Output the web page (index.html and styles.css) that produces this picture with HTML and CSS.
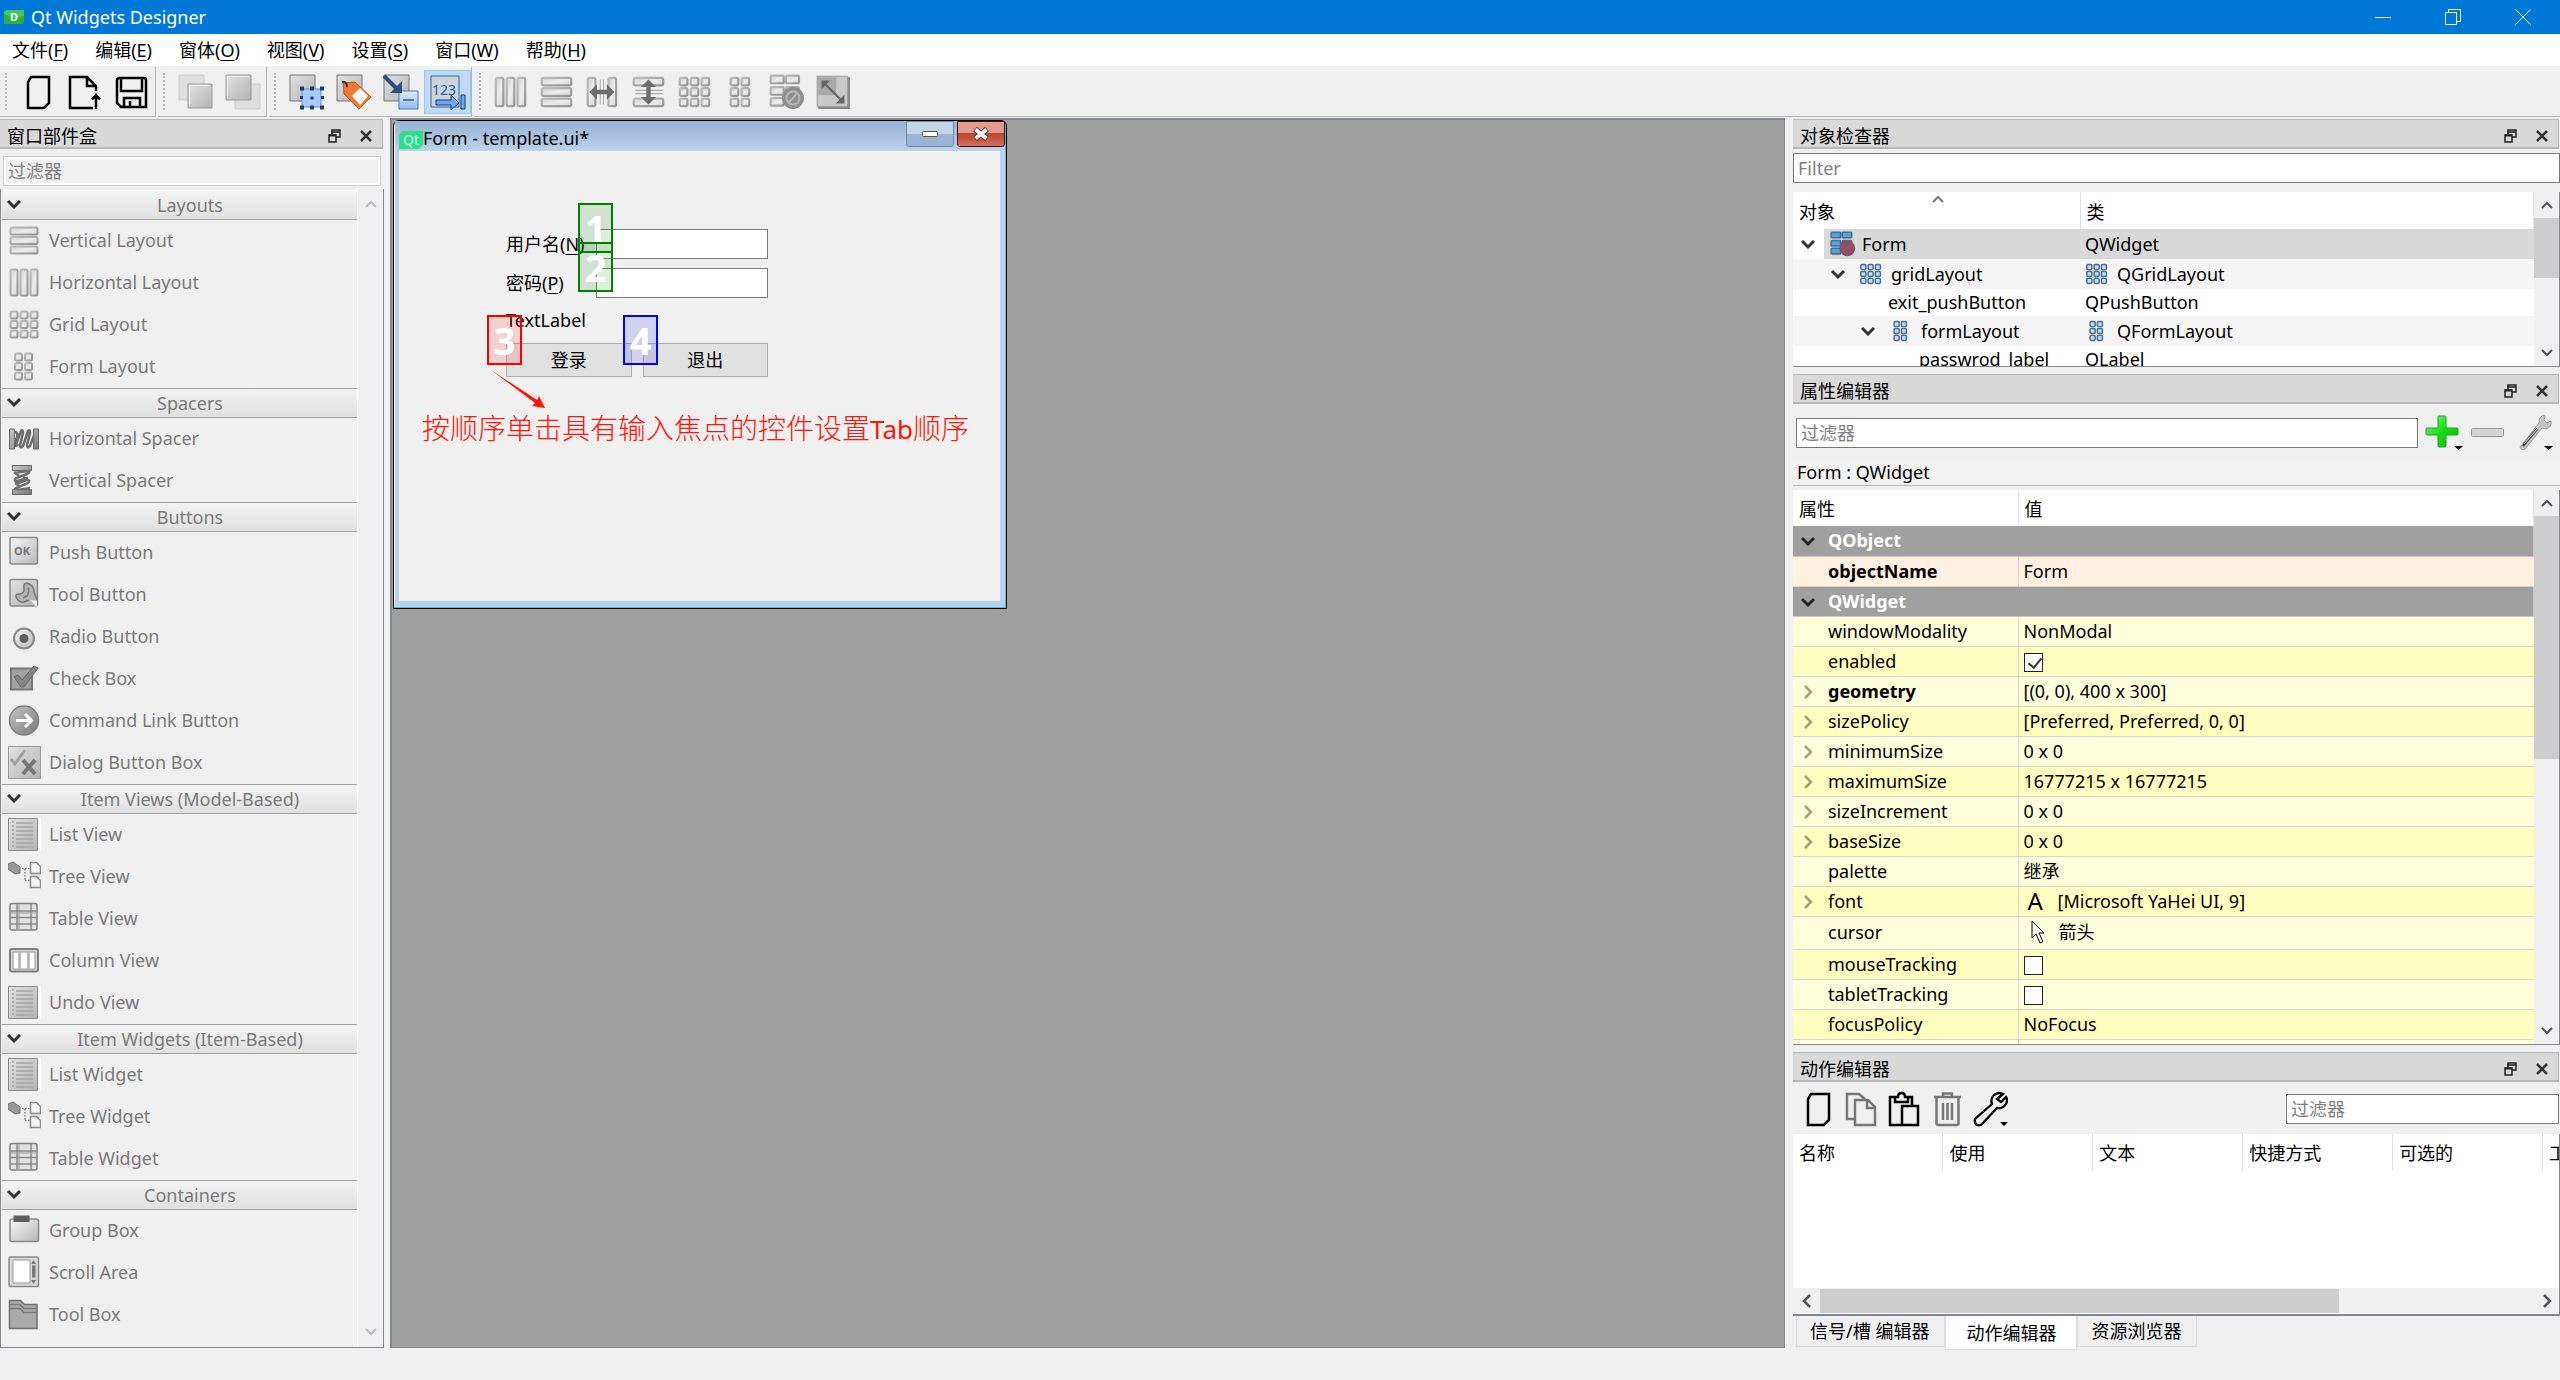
FILE: index.html
```html
<!DOCTYPE html>
<html lang="zh-CN">
<head>
<meta charset="utf-8">
<title>Qt Widgets Designer</title>
<link rel="stylesheet" href="styles.css">
</head>
<body>
<svg class="defs" aria-hidden="true">
  <defs>
    <linearGradient id="g-metal" x1="0" y1="0" x2="1" y2="1"><stop offset="0" stop-color="#f8f8f8"/><stop offset="1" stop-color="#b8b8b8"/></linearGradient>
    <linearGradient id="g-panel" x1="0" y1="0" x2="1" y2="1"><stop offset="0" stop-color="#e2e2e2"/><stop offset="1" stop-color="#b4b4b4"/></linearGradient>
    <linearGradient id="g-dark" x1="0" y1="0" x2="1" y2="1"><stop offset="0" stop-color="#c8c8c8"/><stop offset="1" stop-color="#787878"/></linearGradient>
    <linearGradient id="g-bevel" x1="0" y1="0" x2="1" y2="1"><stop offset="0" stop-color="#d2d2d2"/><stop offset=".5" stop-color="#ececec"/><stop offset="1" stop-color="#d8d8d8"/></linearGradient>
    <linearGradient id="g-edge" x1="0" y1="0" x2="1" y2="1"><stop offset="0" stop-color="#bcbcbc"/><stop offset="1" stop-color="#949494"/></linearGradient>
    <linearGradient id="g-blue" x1="0" y1="0" x2="0" y2="1"><stop offset="0" stop-color="#e0edff"/><stop offset="1" stop-color="#8db8f5"/></linearGradient>
    <linearGradient id="g-green" x1="0" y1="0" x2="1" y2="1"><stop offset="0" stop-color="#7dff7d"/><stop offset=".5" stop-color="#12e012"/><stop offset="1" stop-color="#05b805"/></linearGradient>
  </defs>
  <symbol id="bars-h" viewBox="0 0 33 33"><g class="bevel"><rect x="2.5" y="3.5" width="27" height="7" rx="1.5"/><rect x="2.5" y="13" width="27" height="7" rx="1.5"/><rect x="2.5" y="22.5" width="27" height="7" rx="1.5"/></g></symbol>
  <symbol id="bars-v" viewBox="0 0 33 33"><g class="bevel"><rect x="2.5" y="3.5" width="7" height="26" rx="1.5"/><rect x="12.5" y="3.5" width="7" height="26" rx="1.5"/><rect x="22.5" y="3.5" width="7" height="26" rx="1.5"/></g></symbol>
  <symbol id="grid" viewBox="0 0 33 33"><g class="bevel"><rect x="2.5" y="3.5" width="7" height="7" rx="1.5"/><rect x="12.5" y="3.5" width="7" height="7" rx="1.5"/><rect x="22.5" y="3.5" width="7" height="7" rx="1.5"/><rect x="2.5" y="13" width="7" height="7" rx="1.5"/><rect x="12.5" y="13" width="7" height="7" rx="1.5"/><rect x="22.5" y="13" width="7" height="7" rx="1.5"/><rect x="2.5" y="22.5" width="7" height="7" rx="1.5"/><rect x="12.5" y="22.5" width="7" height="7" rx="1.5"/><rect x="22.5" y="22.5" width="7" height="7" rx="1.5"/></g></symbol>
  <symbol id="form" viewBox="0 0 33 33"><g class="bevel"><rect x="7" y="3.5" width="7" height="7" rx="1.5"/><rect x="17" y="3.5" width="7" height="7" rx="1.5"/><rect x="7" y="13" width="7" height="7" rx="1.5"/><rect x="17" y="13" width="7" height="7" rx="1.5"/><rect x="7" y="22.5" width="7" height="7" rx="1.5"/><rect x="17" y="22.5" width="7" height="7" rx="1.5"/></g></symbol>
  <symbol id="split-h" viewBox="0 0 33 33"><g class="bevel"><rect x="2.5" y="3.5" width="7" height="26" rx="1.5"/><rect x="21.5" y="3.5" width="7" height="26" rx="1.5"/></g><path d="M14 5v23M17 5v23" stroke="#aaa" fill="none"/><path d="M4 16.5l7-7v5h9v-5l7 7-7 7v-5h-9v5z" fill="#6d6d6d"/></symbol>
  <symbol id="split-v" viewBox="0 0 33 33"><g class="bevel"><rect x="2.5" y="3.5" width="27" height="7" rx="1.5"/><rect x="2.5" y="22.5" width="27" height="7" rx="1.5"/></g><path d="M4 15h25M4 18h25" stroke="#aaa" fill="none"/><path d="M16 5l7 7h-5v9h5l-7 7-7-7h5v-9h-5z" fill="#6d6d6d"/></symbol>
  <symbol id="break" viewBox="0 0 33 33"><g class="bevel"><rect x="1.5" y="1.5" width="12" height="7" rx="1"/><rect x="15.5" y="1.5" width="12" height="7" rx="1"/><rect x="1.5" y="12" width="12" height="7" rx="1"/><rect x="15.5" y="12" width="12" height="7" rx="1"/><rect x="1.5" y="22" width="12" height="7" rx="1"/></g><circle class="no-disc" cx="22" cy="22" r="10"/><circle class="no-ring" cx="22" cy="22" r="6"/><path class="no-ring" d="M18 26.500l8-9"/></symbol>
  <symbol id="adjust" viewBox="0 0 33 33"><path d="M2 2h28v28h-28z" fill="#c9c9c9" stroke="#a0a0a0"/><path d="M2.500 2.500h17v17h-17z" fill="#aaa"/><path d="M31 3v28h-28" stroke="#888" stroke-width="2" fill="none"/><path d="M9 9l16 16" stroke="#666" stroke-width="2"/><path d="M6 6h8l-8 8zM27 27v-8l-8 8z" fill="#666"/></symbol>

  <symbol id="new" viewBox="0 0 36 36"><path d="M11 3h18v26l-5 5h-16v-26z" fill="none" stroke="currentColor" stroke-width="2.500"/></symbol>
  <symbol id="open" viewBox="0 0 36 36"><path d="M26 34h-23v-31h17l9 9v5M20 3v9h9" fill="none" stroke="#000" stroke-width="2.500"/><path d="M29 35v-14M25 25.500l4-4.500 4 4.500" fill="none" stroke="#000" stroke-width="2.500"/></symbol>
  <symbol id="save" viewBox="0 0 36 36"><path d="M6 4h24q2 0 2 2v27h-25l-4-4v-23q0-2 3-2z" fill="none" stroke="#000" stroke-width="2.500"/><path d="M7 4v13h21v-13M10 33v-9h16v9M16 32v-5" fill="none" stroke="#000" stroke-width="2.500"/></symbol>
  <symbol id="front" viewBox="0 0 36 36"><path d="M1 1h25v25h-25z" fill="#dedede" stroke="#ccc"/><path d="M10 10h24v24h-24z" fill="url(#g-panel)" stroke="#999"/><path d="M11.500 32v-20.500h20.500" stroke="#eee" fill="none"/></symbol>
  <symbol id="back" viewBox="0 0 36 36"><path d="M10 10h25v25h-25z" fill="#dedede" stroke="#ccc"/><path d="M1 1h25v25h-25z" fill="url(#g-panel)" stroke="#999"/><path d="M2.500 24v-21.500h21.500" stroke="#eee" fill="none"/></symbol>
  <symbol id="edit-widgets" viewBox="0 0 36 36"><path d="M1 1h25v26h-25z" fill="url(#g-panel)" stroke="#777"/><path d="M13 15h19v18h-19z" fill="#a9cbff" stroke="#5c8fd9"/><path d="M11 12.500h4v4h-4zM21 12.500h4v4h-4zM31 12.500h4v4h-4zM11 22h3v3h-3zM32 22h3v3h-3zM11 31.500h4v4h-4zM21 31.500h4v4h-4zM31 31.500h4v4h-4zM21.500 22.500h3v3h-3z" fill="#1f3b70"/></symbol>
  <symbol id="edit-buddies" viewBox="0 0 36 36"><path d="M1 1h25v26h-25z" fill="url(#g-panel)" stroke="#777"/><path d="M7 9l12-1 16 15-12 12-15-15z" fill="#f07a32" stroke="#b85a20"/><path d="M24 14l8 8-8 9-8-9z" fill="#fff"/><path d="M6 8q5-1 5 5" stroke="#333" stroke-width="2" fill="none"/></symbol>
  <symbol id="edit-signals" viewBox="0 0 36 36"><path d="M1 1h25v26h-25z" fill="url(#g-panel)" stroke="#777"/><path d="M16 17h19v18h-19z" fill="url(#g-blue)" stroke="#5576ad"/><path d="M20 26h11" stroke="#5576ad" stroke-width="2"/><path d="M1 2l13 13" stroke="#2d4f86" stroke-width="4"/><path d="M19 19v-12l-12 12z" fill="#2d4f86"/></symbol>

  <symbol id="spacer-h" viewBox="0 0 33 33"><path d="M7 25l6-16q2-2 2 2l-3 12q0 4 3 1l5-15q2-2 2 2l-3 12q0 4 3 1l5-13M7 10q3 0 2 6M10 24q-3-3-2-8" fill="none" stroke="#6c6c6c" stroke-width="2.500"/><path d="M1.500 7h5v20h-5zM25.500 7h5v20h-5z" fill="url(#g-dark)" stroke="#666"/></symbol>
  <symbol id="spacer-v" viewBox="0 0 33 33"><path d="M6 9l14-2q3 1-1 3l-11 4q-3 3 1 3l11-3M7 20l12-4q4 0 1 3l-12 5q-3 2 2 2l12-2M6 8l5 4M21 16l-6-3M7 19l6 4" fill="none" stroke="#707070" stroke-width="2.500"/><path d="M4.500 1.500h19v5h-19zM4.500 25.500h19v5h-19z" fill="url(#g-dark)" stroke="#666"/></symbol>
  <symbol id="tool" viewBox="0 0 33 33"><rect x="2" y="1.500" width="27.500" height="26.500" rx="2" fill="url(#g-panel)" stroke="#888" stroke-width="1.500"/><path d="M19 5q-5 0-4 6 1 4-3 4-4-1-5 2 0 6 7 8 4 1 7-2l7 7v-10q0-6-3-11-2-4-6-4z" fill="#b4b4b4"/><path d="M19 5q-4 0-3 5 1 5-4 6-5 0-4 3 3 6 8 5l5-2M19 5q7 2 7 9l3 8M20 10q2 3-1 8l-4 2" fill="none" stroke="#777" stroke-width="1.500"/><path d="M22 22l7 1v6z" fill="#f2f2f2"/></symbol>
  <symbol id="radio" viewBox="0 0 33 33"><circle cx="16" cy="18.500" r="10" fill="url(#g-metal)" stroke="#888" stroke-width="2"/><circle cx="16" cy="18.500" r="4.500" fill="#606060"/></symbol>
  <symbol id="check" viewBox="0 0 33 33"><path d="M3 6.500h21v21h-21z" fill="#a2a2a2" stroke="#777" stroke-width="2"/><path d="M6 15l4-2 4 5 12-14 4 2-14 19h-3z" fill="#858585" stroke="#666"/></symbol>
  <symbol id="command" viewBox="0 0 33 33"><circle cx="16" cy="16.500" r="14.500" fill="url(#g-dark)" stroke="#808080" stroke-width="1.500"/><path d="M8 16.500h15M17 10l6.500 6.500-6.500 6.500" stroke="#fff" stroke-width="3" fill="none"/></symbol>
  <symbol id="dialog" viewBox="0 0 33 33"><path d="M.5.5h32v32h-32z" fill="url(#g-panel)" stroke="#999"/><path d="M3 13l4 5 10-14" fill="none" stroke="#a0a0a0" stroke-width="3"/><path d="M15 14l12 14M27 14l-12 14" stroke="#777" stroke-width="4"/></symbol>
  <symbol id="list" viewBox="0 0 33 33"><path d="M30 0h3v33h-3z" fill="#fff"/><path d="M.5.500h29v32h-29z" fill="url(#g-panel)" stroke="#8a8a8a"/><path d="M8 5h17M8 9h17M8 13h17M8 17h17M8 21h17M8 25h17M8 29h17" stroke="#a4a4a4" stroke-width="1.500"/><path d="M5 3v28" stroke="#aaa" stroke-width="2" stroke-dasharray="2 2"/></symbol>
  <symbol id="tree" viewBox="0 0 33 33"><path d="M0 4l5-2 7 5v6l-5 1-7-5z" fill="#999" stroke="#777"/><path d="M14 8.500h8M17 9v12M17 20.500h6" stroke="#777" stroke-width="1.500" stroke-dasharray="1.500 1.500" fill="none"/><path d="M22.500 2.500h6l4 4v7h-10zM22.500 16.500h6l4 4v7h-10z" fill="#f4f4f4" stroke="#888" stroke-width="1.500"/></symbol>
  <symbol id="table" viewBox="0 0 33 33"><rect x="2" y="1.500" width="27" height="26.500" rx="2" fill="#e2e2e2" stroke="#808080" stroke-width="1.500"/><path d="M9 2v26M23 2v26M2 9h27M2 15.500h27M2 22h27" stroke="#8a8a8a" stroke-width="1.500"/><path d="M11 2v26M2 11h27" stroke="#999"/></symbol>
  <symbol id="column" viewBox="0 0 33 33"><rect x="2" y="5" width="28" height="22.500" rx="2" fill="#d6d6d6" stroke="#808080" stroke-width="2"/><path d="M5 8h22v17h-22z" fill="#fff" stroke="#999"/><path d="M11.500 8v17M20.500 8v17" stroke="#bbb" stroke-width="3"/></symbol>
  <symbol id="group" viewBox="0 0 33 33"><rect x="2" y="5" width="28.500" height="22.500" rx="2" fill="url(#g-metal)" stroke="#888" stroke-width="1.500"/><path d="M5.500 1.500h16v6.500h-16z" fill="#5e5e5e"/></symbol>
  <symbol id="scrollarea" viewBox="0 0 33 33"><rect x="1" y="1" width="29.500" height="29.500" rx="1.500" fill="#d8d8d8" stroke="#8a8a8a" stroke-width="1.500"/><path d="M5 4h17v23h-17z" fill="#fff" stroke="#999"/><path d="M25.500 4l2.500 4h-5zM25.500 28l2.500-4h-5zM24 9.500h3.500v12h-3.500z" fill="#777"/></symbol>
  <symbol id="toolbox" viewBox="0 0 33 33"><path d="M1.500 30.500v-28h11l4 4h12.500v24z" fill="#ababab" stroke="#707070" stroke-width="1.500"/><path d="M2 6.500h10l4 4h13M2 10.500h10l4 4h13" fill="none" stroke="#777" stroke-width="1.500"/></symbol>

  <symbol id="restore" viewBox="0 0 14 14"><path d="M5 1h8v7h-8zM4 3h9" fill="none" stroke="#222" stroke-width="1.500"/><path d="M2 6h7v7h-7z" fill="#d9d9d9" stroke="#222" stroke-width="1.500"/><path d="M2 6.500h7" stroke="#222" stroke-width="2"/></symbol>
  <symbol id="close" viewBox="0 0 14 14"><path d="M2 2l10 10M12 2l-10 10" stroke="#333" stroke-width="2.500"/></symbol>
  <symbol id="chev-d" viewBox="0 0 14 14"><path d="M1 4l6 6 6-6" fill="none" stroke="currentColor" stroke-width="3"/></symbol>
  <symbol id="chev-u" viewBox="0 0 14 14"><path d="M2 10l5-5 5 5" fill="none" stroke="currentColor" stroke-width="2"/></symbol>
  <symbol id="chev-s" viewBox="0 0 14 14"><path d="M2 4l5 5 5-5" fill="none" stroke="currentColor" stroke-width="2"/></symbol>
  <symbol id="chev-r" viewBox="0 0 14 14"><path d="M4 1l6 6-6 6" fill="none" stroke="currentColor" stroke-width="2.500"/></symbol>
  <symbol id="chev-l" viewBox="0 0 14 14"><path d="M10 1l-6 6 6 6" fill="none" stroke="currentColor" stroke-width="2.500"/></symbol>
</svg>

<header class="titlebar">
  <svg class="app-icon" viewBox="0 0 20 14"><path d="M2 0h18v12l-2 2h-18v-12z" fill="#2bb13c"/><path d="M2 0h18v6l-10 2-10-4v-2z" fill="#44cc52"/><text x="6" y="11" class="app-d">D</text></svg>
  <h1>Qt Widgets Designer</h1>
  <div class="caption">
    <button aria-label="最小化"><svg width="16" height="16"><path d="M0 8.500h16" stroke="#fff"/></svg></button>
    <button aria-label="还原"><svg width="16" height="16" fill="none" stroke="#fff"><path d="M.5 3.500h11v12h-11zM3.500 3.500v-3h12v12h-4"/></svg></button>
    <button aria-label="关闭"><svg width="16" height="16" stroke="#fff"><path d="M.5.500l15 15M15.500.500l-15 15"/></svg></button>
  </div>
</header>

<nav class="menubar">
  <button>文件(<u>F</u>)</button><button>编辑(<u>E</u>)</button><button>窗体(<u>O</u>)</button><button>视图(<u>V</u>)</button><button>设置(<u>S</u>)</button><button>窗口(<u>W</u>)</button><button>帮助(<u>H</u>)</button>
</nav>

<div class="toolbars">
  <div class="group">
    <button aria-label="新建"><svg><use href="#new"/></svg></button>
    <button aria-label="打开"><svg><use href="#open"/></svg></button>
    <button aria-label="保存"><svg><use href="#save"/></svg></button>
  </div>
  <div class="group">
    <button aria-label="前移"><svg><use href="#front"/></svg></button>
    <button aria-label="后移"><svg><use href="#back"/></svg></button>
  </div>
  <div class="group">
    <button aria-label="编辑控件"><svg><use href="#edit-widgets"/></svg></button>
    <button aria-label="编辑伙伴"><svg><use href="#edit-buddies"/></svg></button>
    <button aria-label="编辑信号/槽"><svg><use href="#edit-signals"/></svg></button>
    <button class="active" aria-label="编辑Tab顺序"><svg viewBox="0 0 36 36"><path d="M1 2h28v31h-28z" fill="#d0d4da" stroke="#2f64ad"/><text x="2" y="21" class="tab-num">123</text><path d="M6 26h15v-5l8 8-8 7v-5h-15zM31 21h4v14h-4z" fill="#6fa9f5" stroke="#16396f"/></svg></button>
  </div>
  <div class="group rest">
    <button aria-label="水平布局"><svg><use href="#bars-v"/></svg></button>
    <button aria-label="垂直布局"><svg><use href="#bars-h"/></svg></button>
    <button aria-label="水平分裂器"><svg><use href="#split-h"/></svg></button>
    <button aria-label="垂直分裂器"><svg><use href="#split-v"/></svg></button>
    <button aria-label="栅格布局"><svg><use href="#grid"/></svg></button>
    <button aria-label="表单布局"><svg><use href="#form"/></svg></button>
    <button aria-label="打破布局"><svg><use href="#break"/></svg></button>
    <button aria-label="调整大小"><svg><use href="#adjust"/></svg></button>
  </div>
</div>

<main class="workspace">
  <aside class="dock left">
    <div class="dock-title"><h2>窗口部件盒</h2><button aria-label="浮动"><svg><use href="#restore"/></svg></button><button aria-label="关闭"><svg><use href="#close"/></svg></button></div>
    <input class="filter" type="text" placeholder="过滤器" aria-label="过滤器">
    <div class="box">
      <div class="categories">
        <h3><svg><use href="#chev-d"/></svg>Layouts</h3>
        <ul>
          <li><svg><use href="#bars-h"/></svg>Vertical Layout</li>
          <li><svg><use href="#bars-v"/></svg>Horizontal Layout</li>
          <li><svg><use href="#grid"/></svg>Grid Layout</li>
          <li><svg><use href="#form"/></svg>Form Layout</li>
        </ul>
        <h3><svg><use href="#chev-d"/></svg>Spacers</h3>
        <ul>
          <li><svg><use href="#spacer-h"/></svg>Horizontal Spacer</li>
          <li><svg><use href="#spacer-v"/></svg>Vertical Spacer</li>
        </ul>
        <h3><svg><use href="#chev-d"/></svg>Buttons</h3>
        <ul>
          <li><svg viewBox="0 0 33 33"><rect x="2" y="1.500" width="27.500" height="26.500" rx="2" fill="url(#g-metal)" stroke="#888" stroke-width="1.500"/><text x="6" y="19" class="ok">OK</text></svg>Push Button</li>
          <li><svg><use href="#tool"/></svg>Tool Button</li>
          <li><svg><use href="#radio"/></svg>Radio Button</li>
          <li><svg><use href="#check"/></svg>Check Box</li>
          <li><svg><use href="#command"/></svg>Command Link Button</li>
          <li><svg><use href="#dialog"/></svg>Dialog Button Box</li>
        </ul>
        <h3><svg><use href="#chev-d"/></svg>Item Views (Model-Based)</h3>
        <ul>
          <li><svg><use href="#list"/></svg>List View</li>
          <li><svg><use href="#tree"/></svg>Tree View</li>
          <li><svg><use href="#table"/></svg>Table View</li>
          <li><svg><use href="#column"/></svg>Column View</li>
          <li><svg><use href="#list"/></svg>Undo View</li>
        </ul>
        <h3><svg><use href="#chev-d"/></svg>Item Widgets (Item-Based)</h3>
        <ul>
          <li><svg><use href="#list"/></svg>List Widget</li>
          <li><svg><use href="#tree"/></svg>Tree Widget</li>
          <li><svg><use href="#table"/></svg>Table Widget</li>
        </ul>
        <h3><svg><use href="#chev-d"/></svg>Containers</h3>
        <ul>
          <li><svg><use href="#group"/></svg>Group Box</li>
          <li><svg><use href="#scrollarea"/></svg>Scroll Area</li>
          <li><svg><use href="#toolbox"/></svg>Tool Box</li>
        </ul>
      </div>
      <div class="vscroll faint"><svg><use href="#chev-u"/></svg><svg><use href="#chev-s"/></svg></div>
    </div>
  </aside>

  <section class="mdi">
    <div class="subwindow">
      <div class="sub-title">
        <svg class="qt" viewBox="0 0 24 18"><path d="M4 0h20v14l-4 4h-20v-14z" fill="#2cde85"/><text x="4" y="14" class="qt-text">Qt</text></svg>
        <span>Form - template.ui*</span>
        <button class="min" aria-label="最小化"><svg width="16" height="6"><rect x=".5" y=".5" width="15" height="5" rx="1" fill="#fff" stroke="#555"/></svg></button>
        <button class="x" aria-label="关闭"><svg width="18" height="16"><path d="M3 3l12 10M15 3l-12 10" stroke="#4a3a44" stroke-width="6"/><path d="M3.500 3.500l11 9M14.500 3.500l-11 9" stroke="#f4f4f4" stroke-width="4"/></svg></button>
      </div>
      <div class="client">
        <form class="login">
          <div class="field"><label for="user">用户名(<u>N</u>)</label><input id="user" type="text"></div>
          <div class="field"><label for="pass">密码(<u>P</u>)</label><input id="pass" type="password"></div>
          <p>TextLabel</p>
          <div class="actions"><button type="button">登录</button><button type="button">退出</button></div>
        </form>
        <span class="mark m1">1</span><span class="mark m2">2</span><span class="mark m3">3</span><span class="mark m4">4</span>
        <svg class="arrow" viewBox="0 0 56 40"><path d="M1 1L45 34l-3 3 13 2-6-12-2 4z" fill="#ff1408"/></svg>
        <p class="note">按顺序单击具有输入焦点的控件设置<b>Tab</b>顺序</p>
      </div>
    </div>
  </section>

  <aside class="right">
    <section class="dock inspector">
      <div class="dock-title"><h2>对象检查器</h2><button aria-label="浮动"><svg><use href="#restore"/></svg></button><button aria-label="关闭"><svg><use href="#close"/></svg></button></div>
      <input class="filter" type="text" placeholder="Filter" aria-label="Filter">
      <div class="box">
        <div class="clip">
          <table class="objects">
            <thead><tr><th>对象<svg class="sort"><use href="#chev-u"/></svg></th><th>类</th></tr></thead>
            <tbody>
              <tr class="sel"><td><div class="cell d0"><svg class="ch"><use href="#chev-d"/></svg><span class="fill"><svg class="ic big"><use href="#break"/></svg>Form</span></div></td><td>QWidget</td></tr>
              <tr class="alt"><td><div class="cell d1"><svg class="ch"><use href="#chev-d"/></svg><svg class="ic"><use href="#grid"/></svg>gridLayout</div></td><td><div class="cell"><svg class="ic"><use href="#grid"/></svg>QGridLayout</div></td></tr>
              <tr class="low"><td><div class="cell d2">exit_pushButton</div></td><td>QPushButton</td></tr>
              <tr class="alt"><td><div class="cell d3"><svg class="ch"><use href="#chev-d"/></svg><svg class="ic"><use href="#form"/></svg>formLayout</div></td><td><div class="cell"><svg class="ic"><use href="#form"/></svg>QFormLayout</div></td></tr>
              <tr class="low"><td><div class="cell d4">passwrod_label</div></td><td>QLabel</td></tr>
            </tbody>
          </table>
        </div>
        <div class="vscroll"><svg><use href="#chev-u"/></svg><i class="thumb"></i><svg><use href="#chev-s"/></svg></div>
      </div>
    </section>

    <section class="dock properties">
      <div class="dock-title"><h2>属性编辑器</h2><button aria-label="浮动"><svg><use href="#restore"/></svg></button><button aria-label="关闭"><svg><use href="#close"/></svg></button></div>
      <div class="bar">
        <input class="filter" type="text" placeholder="过滤器" aria-label="过滤器">
        <button aria-label="添加动态属性"><svg viewBox="0 0 38 38"><path d="M13 3q0-1 1-1h6q1 0 1 1v11h11q1 0 1 1v5q0 1-1 1h-11v11q0 1-1 1h-6q-1 0-1-1v-11h-11q-1 0-1-1v-5q0-1 1-1h11z" fill="url(#g-green)" stroke="#2c9c2c"/><path d="M29 32h9l-4.500 4z"/></svg></button>
        <button aria-label="删除动态属性"><svg viewBox="0 0 38 38"><rect x="1.500" y="14.500" width="32" height="8" rx="1" fill="#d5d5d5" stroke="#999"/></svg></button>
        <button aria-label="配置属性编辑器"><svg viewBox="0 0 38 38"><path d="M24 9q-1-5 4-8l2 1-1 4 3 3 4-2q1 6-5 8l-4-1-17 21q-4 2-5-2z" fill="#c4c4c4" stroke="#999"/><path d="M22 15l-14 17" stroke="#444" stroke-width="2.500"/><path d="M23 14l-14 16" stroke="#eee"/><path d="M29 32h9l-4.500 4z"/></svg></button>
      </div>
      <p class="object-label">Form : QWidget</p>
      <div class="box">
        <div class="clip">
          <table class="props">
            <thead><tr><th>属性</th><th>值</th></tr></thead>
            <tbody>
              <tr class="head"><th colspan="2"><svg><use href="#chev-d"/></svg>QObject</th></tr>
              <tr class="peach"><th class="bold">objectName</th><td>Form</td></tr>
              <tr class="head"><th colspan="2"><svg><use href="#chev-d"/></svg>QWidget</th></tr>
              <tr><th>windowModality</th><td>NonModal</td></tr>
              <tr class="odd"><th><label for="p-enabled">enabled</label></th><td><input id="p-enabled" type="checkbox" checked></td></tr>
              <tr><th class="bold"><svg><use href="#chev-r"/></svg>geometry</th><td>[(0, 0), 400 x 300]</td></tr>
              <tr class="odd"><th><svg><use href="#chev-r"/></svg>sizePolicy</th><td>[Preferred, Preferred, 0, 0]</td></tr>
              <tr><th><svg><use href="#chev-r"/></svg>minimumSize</th><td>0 x 0</td></tr>
              <tr class="odd"><th><svg><use href="#chev-r"/></svg>maximumSize</th><td>16777215 x 16777215</td></tr>
              <tr><th><svg><use href="#chev-r"/></svg>sizeIncrement</th><td>0 x 0</td></tr>
              <tr class="odd"><th><svg><use href="#chev-r"/></svg>baseSize</th><td>0 x 0</td></tr>
              <tr><th>palette</th><td>继承</td></tr>
              <tr class="odd"><th><svg><use href="#chev-r"/></svg>font</th><td><div class="cell"><span class="font-a">A</span>[Microsoft YaHei UI, 9]</div></td></tr>
              <tr class="tall"><th>cursor</th><td><div class="cell"><svg class="pointer" viewBox="0 0 14 24"><path d="M1 1v17l4-4 4 9 3-1.500-4-8.500h5z" fill="#fff" stroke="#000"/></svg>箭头</div></td></tr>
              <tr class="odd"><th><label for="p-mouse">mouseTracking</label></th><td><input id="p-mouse" type="checkbox"></td></tr>
              <tr><th><label for="p-tablet">tabletTracking</label></th><td><input id="p-tablet" type="checkbox"></td></tr>
              <tr class="odd"><th>focusPolicy</th><td>NoFocus</td></tr>
              <tr><th></th><td></td></tr>
            </tbody>
          </table>
        </div>
        <div class="vscroll"><svg><use href="#chev-u"/></svg><i class="thumb"></i><svg><use href="#chev-s"/></svg></div>
      </div>
    </section>

    <section class="dock actions-dock">
      <div class="dock-title"><h2>动作编辑器</h2><button aria-label="浮动"><svg><use href="#restore"/></svg></button><button aria-label="关闭"><svg><use href="#close"/></svg></button></div>
      <div class="bar">
        <button aria-label="新建"><svg><use href="#new"/></svg></button>
        <button aria-label="复制"><svg viewBox="0 0 36 36" fill="none" stroke="#777" stroke-width="2.500"><path d="M12 28h-8v-25h12l6 5M12 9h13l7 7v18h-20zM24 9v8h8"/></svg></button>
        <button aria-label="粘贴"><svg viewBox="0 0 36 36" fill="none" stroke="#000" stroke-width="2.500"><path d="M16 34h-12v-28h6M26 14v-8h-6M9 6h3q0-4 3.500-4t3.500 4h3v5h-13zM16 15h16v19h-16z"/></svg></button>
        <button aria-label="删除"><svg viewBox="0 0 36 36" fill="none" stroke="#777" stroke-width="2.500"><path d="M5 6h27M14 6v-3.500h9v3.500M7.500 6v26q0 2 2 2h18q2 0 2-2v-26M14 12v17M18.500 12v17M23 12v17"/></svg></button>
        <button aria-label="配置"><svg viewBox="0 0 36 36"><path d="M31 3q-5-2-9 1-4 4-2 9l-17 15q-1 4 2 6 3 1 5-1l15-16q6 1 9-4 2-4 0-7l-5 5-4-3z" fill="none" stroke="#000" stroke-width="2.300"/><path d="M28 31h8l-4 4z"/></svg></button>
        <input class="filter" type="text" placeholder="过滤器" aria-label="过滤器">
      </div>
      <div class="box">
        <div class="clip">
          <table class="acts"><thead><tr><th>名称</th><th>使用</th><th>文本</th><th>快捷方式</th><th>可选的</th><th>工具提示</th></tr></thead></table>
        </div>
        <div class="hscroll"><svg><use href="#chev-l"/></svg><i class="thumb"></i><svg><use href="#chev-r"/></svg></div>
      </div>
      <div class="tabs" role="tablist"><button role="tab">信号/槽 编辑器</button><button role="tab" class="on" aria-selected="true">动作编辑器</button><button role="tab">资源浏览器</button></div>
    </section>
  </aside>
</main>
<footer class="status"></footer>
</body>
</html>
```
FILE: styles.css
```css
* { box-sizing: border-box; margin: 0; padding: 0; }
body {
  height: 100vh;
  display: flex;
  flex-direction: column;
  overflow: hidden;
  background: #f0f0f0;
  color: #000;
  font: 18px/24px "Noto Sans", "Noto Sans CJK SC", sans-serif;
}
button { border: 0; background: none; font: inherit; color: inherit; }
svg { display: block; flex: none; }
h1, h2, h3, th { font-size: inherit; font-weight: 400; text-align: left; }
ul { list-style: none; }
u { text-underline-offset: 3px; text-decoration-thickness: 1px; }
.defs { position: absolute; width: 0; height: 0; }
.bevel { fill: var(--bevel, url(#g-bevel)); stroke: var(--edge, url(#g-edge)); stroke-width: 2px; }
.no-disc { fill: var(--disc, #8e8e8e); }
.no-ring { fill: none; stroke: var(--ring, #b5b5b5); stroke-width: 2px; }
.tab-num { font: 14px "Noto Sans", sans-serif; fill: #1c5ab5; }
.ok { font: bold 11px "Noto Sans", sans-serif; fill: #777; }

.titlebar { height: 34px; display: flex; align-items: center; background: #0078d7; color: #fff; padding: 0 2px 0 4px; }
.app-icon { width: 20px; height: 14px; margin-right: 7px; }
.app-d { font: bold 11px "Noto Sans", sans-serif; fill: #fff; }
.titlebar h1 { flex: 1; }
.caption { display: flex; height: 100%; }
.caption button { width: 70px; display: flex; align-items: center; justify-content: center; }

.menubar { height: 33px; display: flex; gap: 27px; padding-left: 12px; background: #fff; border-bottom: 1px solid #f0f0f0; }
.menubar button { white-space: nowrap; }

.toolbars { height: 50px; display: flex; gap: 2px; }
.group { position: relative; display: flex; align-items: center; padding: 1px 0 0 14px; border-right: 1px solid #b5b5b5; border-bottom: 1px solid #b5b5b5; }
.group::before { content: ""; position: absolute; left: 5px; top: 6px; bottom: 6px; border-left: 2px dotted #b8b8b8; }
.group button { width: 47px; height: 44px; display: flex; align-items: center; justify-content: center; border: 1px solid transparent; }
.group button svg { width: 36px; height: 36px; }
.group .active { background: #c0dcf3; border-color: #90c8f6; }
.rest { flex: 1; border-right: 0; }
.rest button { width: 46px; }

.workspace { flex: 1; min-height: 0; display: flex; }
.dock-title { height: 30px; display: flex; align-items: center; gap: 18px; padding: 4px 9px 0 7px; background: #d9d9d9; border: 1px solid #b8b8b8; border-width: 1px 1px 2px 0; }
.dock-title h2 { flex: 1; }
.dock-title button svg { width: 14px; height: 14px; }
.filter { font: inherit; height: 30px; padding: 0 4px; background: #fff; border: 1px solid #7a7a7a; min-width: 0; }
.filter::placeholder { color: #808080; opacity: 1; }
.box { position: relative; display: flex; background: #fff; border: 1px solid #828790; min-height: 0; }

.vscroll { width: 25px; display: flex; flex-direction: column; align-items: center; justify-content: space-between; background: #f0f0f0; padding: 6px 0; color: #555; }
.vscroll svg, .hscroll svg { width: 14px; height: 14px; }
.thumb { background: #cdcdcd; }

.left { width: 384px; padding-top: 2px; display: flex; flex-direction: column; }
.left .dock-title { margin-right: 1px; }
.left .filter { margin: 7px 3px 3px; border: 1px solid #ccc; background: #f0f0f0; box-shadow: inset 0 0 0 2px #fff; }
.left .box { flex: 1; background: #f0f0f0; color: #7a7a7a; border-top: 0; }
.categories { flex: 1; overflow: hidden; padding: 1px 0 0 1px; border-right: 1px solid #fff; }
.categories h3 { position: relative; height: 30px; line-height: 28px; padding-left: 21px; text-align: center; background: linear-gradient(#f4f4f4, #e0e0e0); border-top: 1px solid #a0a0a0; border-bottom: 1px solid #a0a0a0; }
.categories h3:first-child { border-top-color: #fff; }
.categories h3 svg { position: absolute; left: 5px; top: 6px; width: 14px; height: 14px; color: #333; }
.categories li { height: 42px; display: flex; align-items: center; gap: 8px; padding: 0 0 2px 6px; }
.categories li svg { width: 33px; height: 33px; }
.faint { color: #bbb; padding: 8px 0; }

.mdi { flex: 1; position: relative; margin: 1px 8px 0 6px; background: #a0a0a0; border: 2px solid #828790; border-width: 2px 1px 1px 2px; }
.subwindow { position: absolute; left: 1px; top: 0; width: 614px; background: #b9d1ea; border: 1px solid #000; border-radius: 6px 6px 0 0; padding: 0 6px 7px 5px; box-shadow: inset -1px -1px #38c8e8, inset 1px 1px #fff; }
.sub-title { height: 30px; display: flex; align-items: flex-start; gap: 3px; margin: 0 -5px 0 -4px; padding-left: 4px; background: linear-gradient(#9ab3d2, #bad2ec); }
.sub-title span { flex: 1; line-height: 34px; margin-left: -3px; }
.qt { width: 24px; height: 18px; margin-top: 10px; }
.qt-text { font: 14px "Noto Sans", sans-serif; fill: #cfe; }
.sub-title button { width: 48px; height: 26px; display: flex; align-items: center; justify-content: center; border: 1px solid #6f86a8; border-radius: 0 0 3px 3px; }
.min { background: linear-gradient(#c2d5e9 50%, #9ab4d1 50%); }
.sub-title .x { background: linear-gradient(#e59a8c 45%, #bc4028 45%, #d4705c); border-color: #43101c; }
.client { position: relative; height: 450px; background: #f0f0f0; border-top: 1px solid #fff; padding: 77px 0 0 107px; }
.login { width: 262px; display: flex; flex-direction: column; gap: 9px; }
.field { display: flex; align-items: center; }
.field label { width: 90px; white-space: nowrap; }
.field input { flex: 1; min-width: 0; height: 30px; border: 1px solid #7a7a7a; background: #fff; }
.login p { height: 27px; line-height: 27px; }
.actions { display: flex; gap: 11px; }
.actions button { flex: 1; height: 34px; background: #e1e1e1; border: 1px solid #adadad; }
.mark { position: absolute; width: 35px; height: 50px; border: 2px solid; font: bold 38px/46px "Noto Sans", sans-serif; text-align: center; -webkit-text-fill-color: #fff; }
.m1 { left: 179px; top: 51px; color: #008000; background: rgba(0, 128, 0, .13); }
.m2 { left: 179px; top: 90px; color: #008000; background: rgba(0, 128, 0, .13); }
.m3 { left: 88px; top: 163px; color: #f00; background: rgba(255, 0, 0, .13); }
.m4 { left: 224px; top: 163px; color: #00f; background: rgba(0, 0, 255, .13); }
.arrow { position: absolute; left: 91px; top: 217px; width: 56px; height: 40px; }
.note { position: absolute; left: 23px; top: 257px; white-space: nowrap; color: #ff1408; font: 300 28px/36px "Noto Sans CJK SC", sans-serif; }
.note b { font: 26px "Noto Sans", sans-serif; }

.right { width: 767px; padding-top: 2px; display: flex; flex-direction: column; gap: 7px; }
.right .dock { display: flex; flex-direction: column; }
.right .dock-title { margin-right: 1px; flex: none; }
.right .box { border-width: 0 1px 1px 0; }
.clip { flex: 1; overflow: hidden; }
table { width: 100%; table-layout: fixed; border-collapse: collapse; }
td, th { white-space: nowrap; padding: 0; }
.cell { display: flex; align-items: center; }

.inspector .filter { margin: 4px 0 9px; }
.inspector .box { height: 175px; }
.objects thead tr { height: 37px; }
.objects th { position: relative; padding: 3px 0 0 6px; border-right: 1px solid #e0e0e0; }
.objects th:first-child { width: 287px; }
.sort { position: absolute; left: 138px; top: 0; width: 14px; height: 14px; color: #777; }
.objects tbody tr { height: 30px; }
.objects tbody .low { height: 27px; }
.objects td { padding-bottom: 1px; }
.objects .sel td { padding-bottom: 0; }
.objects td + td { padding-left: 5px; }
.alt { background: #f5f5f5; }
.sel td + td, .fill { background: #d9d9d9; }
.fill { flex: 1; height: 30px; display: flex; align-items: center; padding-left: 6px; }
.objects { --bevel: #b5e0f8; --edge: #4d6a8f; --disc: #7a5570; --ring: #b8405a; }
.ch { width: 14px; height: 14px; color: #333; margin-right: 14px; }
.ic { width: 24px; height: 24px; margin-right: 8px; }
.big { width: 26px; height: 26px; margin-right: 6px; --bevel: #4da6e0; }
.d0 { padding-left: 8px; }
.d0 .ch { margin-right: 9px; }
.d1 { padding-left: 38px; }
.d2 { padding-left: 95px; }
.d3 { padding-left: 68px; }
.d4 { padding-left: 126px; }
.inspector .thumb, .properties .thumb { width: 25px; }
.inspector .thumb { height: 60px; margin: 6px 0 auto; }

.properties { flex: 1; min-height: 0; }
.properties .bar { display: flex; align-items: center; gap: 7px; padding: 10px 7px 7px 3px; }
.properties .filter { flex: 1; }
.properties .bar button { width: 38px; height: 38px; }
.properties .bar button svg { width: 38px; height: 38px; }
.object-label { height: 27px; padding: 1px 4px; border-bottom: 1px solid #b8b8b8; background: #f2f2f2; margin-bottom: 4px; }
.properties .box { flex: 1; }
.props thead tr { height: 36px; }
.props thead th { padding: 2px 0 0 6px; border-right: 1px solid #e0e0e0; }
.props thead th:first-child { width: 225px; }
.props tbody tr { height: 30px; background: #ffffdc; }
.props tbody .odd { background: #ffffbf; }
.props tbody .peach { background: #fff0df; }
.props tbody .head { background: #a0a0a0; color: #fff; font-weight: 700; }
.props tbody .tall { height: 33px; }
.props tbody th, .props td { border-bottom: 1px solid #d4d4d4; }
.props tbody th { position: relative; padding: 0 0 1px 35px; border-right: 1px solid #d4d4d4; }
.props .head th, .props .bold { font-weight: 700; }
.props .head th { border-color: #c8c8c8; }
.props tbody th svg { position: absolute; left: 8px; top: 8px; width: 14px; height: 14px; color: #a0a07c; }
.props .head th svg { color: #222; }
.props td { padding: 0 0 1px 5px; }
.font-a { width: 34px; padding-left: 4px; font-size: 24px; }
.pointer { width: 14px; height: 24px; margin: 0 14px 0 7px; }
.props input { display: block; appearance: none; width: 19px; height: 19px; border: 1px solid #222; background: #fff; margin-top: 3px; }
.props input:checked::after { content: ""; display: block; width: 6px; height: 11px; margin: 1px 0 0 6px; border: solid #333; border-width: 0 2px 2px 0; transform: rotate(40deg); }
.properties .thumb { height: 243px; margin: 6px 0 auto; }

.actions-dock .bar { display: flex; align-items: center; gap: 7px; padding: 9px 1px 7px 7px; }
.actions-dock .bar button, .actions-dock .bar button svg { width: 36px; height: 36px; }
.actions-dock .filter { width: 273px; margin-left: auto; }
.actions-dock .box { height: 182px; flex-direction: column; border-bottom-width: 2px; }
.acts { width: 900px; }
.acts tr { height: 37px; }
.acts th { padding-left: 6px; border-right: 1px solid #e0e0e0; }
.hscroll { height: 25px; display: flex; align-items: center; padding: 0 5px 0 7px; background: #f0f0f0; color: #555; margin-bottom: 1px; }
.hscroll .thumb { width: 519px; height: 24px; margin: 0 auto 0 6px; }
.tabs { display: flex; align-items: flex-start; padding-left: 3px; height: 32px; }
.tabs button { height: 31px; padding: 0 15px 0 13px; border: 1px solid #dcdcdc; border-top: 0; white-space: nowrap; }
.tabs .on { height: 34px; padding: 0 20px; background: #fff; flex: none; }
.status { height: 32px; }
```
